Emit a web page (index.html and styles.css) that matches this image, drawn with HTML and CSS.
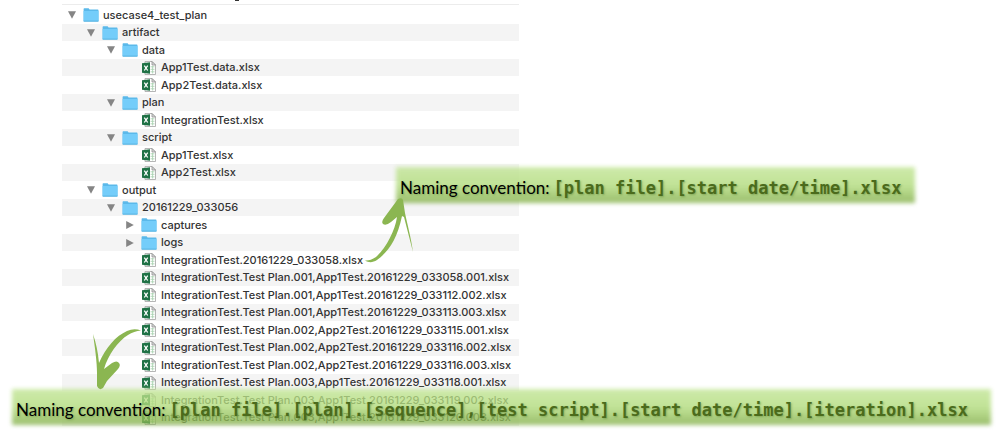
FILE: index.html
```html
<!DOCTYPE html>
<html lang="en">
<head>
<meta charset="utf-8">
<title>Test plan files</title>
<link rel="stylesheet" href="styles.css">
<script src="tree.js" defer></script>
</head>
<body>
<svg class="sprite" aria-hidden="true">
  <symbol id="folder" viewBox="0 0 16 14">
    <path d="M.6 1Q.6.3 1.3.3H5.6L6.6 1.6H14.8Q15.5 1.6 15.5 2.3V12.7Q15.5 13.5 14.8 13.5H1.3Q.6 13.5.6 12.7Z" fill="#5bb9ea"/>
    <path d="M.6 2.9H15.5V12.7Q15.5 13.2 14.8 13.2H1.3Q.6 13.2.6 12.7Z" fill="#74cdfa"/>
    <path d="M.6 13.1H15.5" stroke="#56aedd" stroke-width=".8"/>
  </symbol>
  <symbol id="excel" viewBox="0 0 16 14">
    <path d="M4 .5H11L14.5 4V13.5H4Z" fill="#fff" stroke="#a3a3a3" stroke-width=".8"/>
    <path d="M11 .5V4H14.5Z" fill="#ddd" stroke="#8f8f8f" stroke-width=".8"/>
    <path d="M9.5 5.8H13.5M9.5 8.3H13.5M9.5 10.8H13.5M11.6 5V12.5" stroke="#a5cfac" stroke-width=".8"/>
    <path d="M1 2.3L9 1.2V12.8L1 11.7Z" fill="#1e7145"/>
    <path d="M3.3 4.6L6.7 9.5M6.7 4.6L3.3 9.5" stroke="#fff" stroke-width="1.3"/>
  </symbol>
  <symbol id="arrow" viewBox="0 0 10 10"><path d="M1 1.2H9L5 8.8Z" fill="#858585"/></symbol>
</svg>
<main class="page">
  <div class="clip-row"><span class="clip-mark"></span></div>
  <ul class="tree" id="tree"></ul>

  <svg class="pointer pointer-up" viewBox="0 0 52 68" aria-hidden="true">
    <path d="M1 63.500C5 66 9 65.500 13 63C24 55 33 43 38 19L40 20L49 55C47 40 43 26 41 16L39 3Q38 0 34 2L20 21Q17 25 19 27Q22 29 27 25L33 20C31 34 22 51 12 60Q6 64 1 63.500Z"/>
  </svg>
  <svg class="pointer pointer-down" viewBox="0 0 52 64" aria-hidden="true">
    <path d="M51 2.500Q44 0 37 3C26 8 16 19 9 35C8 24 6 15 3 6C5 20 7 34 7 45L7 58Q9 63 13 60L17 53L28 41Q31 37 29 35Q27 32 22 35L14 41C18 27 28 13 38 7Q44 3 51 2.500Z"/>
  </svg>

  <p class="callout callout-run"><span>Naming convention:</span> <code>[plan file].[start date/time].xlsx</code></p>
  <p class="callout callout-step"><span>Naming convention:</span> <code>[plan file].[plan].[sequence],[test script].[start date/time].[iteration].xlsx</code></p>
</main>
</body>
</html>
```
FILE: styles.css
```css
body {
  margin: 0;
  background: #fff;
  color: #333;
  font: 500 11px/17px Inter, "Liberation Sans", sans-serif;
}
.sprite { display: none; }
.page {
  position: relative;
  min-height: 438px;
  overflow: hidden;
}
.clip-row {
  height: 5px;
  margin-left: 62px;
  width: 457px;
  padding-left: 173px;
  box-sizing: border-box;
  border-bottom: 1px solid #ececec;
}
.clip-mark {
  display: block;
  width: 4px;
  height: 1px;
  background: #333;
}
.tree {
  display: grid;
  grid-auto-rows: 18px 17px;
  width: 457px;
  margin: 1px 0 0 62px;
  padding: 0;
  list-style: none;
}
.row {
  display: flex;
  align-items: center;
  white-space: nowrap;
}
.row:nth-child(even) { background: #f4f4f4; }
.level-1 { padding-left: 19px; }
.level-2 { padding-left: 39px; }
.level-3 { padding-left: 58px; }
.toggle {
  width: 21px;
  height: 16px;
  padding: 0 0 0 5px;
  border: 0;
  background: none;
  display: flex;
  align-items: center;
}
.toggle svg { width: 10px; height: 10px; }
.toggle[aria-expanded="false"] svg { transform: rotate(-90deg); }
.spacer { width: 21px; }
.icon {
  width: 16px;
  height: 14px;
  margin-right: 4px;
}
.pointer {
  position: absolute;
  z-index: 2;
  fill: #8bb651;
}
.pointer-up {
  left: 364px;
  top: 197px;
  width: 52px;
  height: 68px;
}
.pointer-down {
  left: 90px;
  top: 328px;
  width: 52px;
  height: 64px;
}
.callout {
  position: absolute;
  z-index: 1;
  box-sizing: border-box;
  display: flex;
  align-items: center;
  gap: 4px;
  height: 38px;
  margin: 0;
  padding: 6px 5px 0;
  white-space: nowrap;
  color: #000;
  font: 17px/24px Lato, sans-serif;
  text-shadow: 1px 1px 2px #5a802f80;
}
.callout::before {
  content: "";
  position: absolute;
  inset: 1px;
  z-index: -1;
  background: linear-gradient(#c0e492c8, #b0db7ac8 50%, #84b04bd0);
  filter: blur(2px);
}
.callout code {
  color: #4b6b1c;
  font: bold 17px/24px "DejaVu Sans Mono", monospace;
}
.callout-run {
  left: 395px;
  top: 166px;
  width: 521px;
}
.callout-step {
  left: 11px;
  top: 388px;
  width: 981px;
}
```
FILE: tree.js
```js
const entries = [
  [0, "open", "usecase4_test_plan"],
  [1, "open", "artifact"],
  [2, "open", "data"],
  [3, "file", "App1Test.data.xlsx"],
  [3, "file", "App2Test.data.xlsx"],
  [2, "open", "plan"],
  [3, "file", "IntegrationTest.xlsx"],
  [2, "open", "script"],
  [3, "file", "App1Test.xlsx"],
  [3, "file", "App2Test.xlsx"],
  [1, "open", "output"],
  [2, "open", "20161229_033056"],
  [3, "closed", "captures"],
  [3, "closed", "logs"],
  [3, "file", "IntegrationTest.20161229_033058.xlsx"],
  [3, "file", "IntegrationTest.Test Plan.001,App1Test.20161229_033058.001.xlsx"],
  [3, "file", "IntegrationTest.Test Plan.001,App1Test.20161229_033112.002.xlsx"],
  [3, "file", "IntegrationTest.Test Plan.001,App1Test.20161229_033113.003.xlsx"],
  [3, "file", "IntegrationTest.Test Plan.002,App2Test.20161229_033115.001.xlsx"],
  [3, "file", "IntegrationTest.Test Plan.002,App2Test.20161229_033116.002.xlsx"],
  [3, "file", "IntegrationTest.Test Plan.002,App2Test.20161229_033116.003.xlsx"],
  [3, "file", "IntegrationTest.Test Plan.003,App1Test.20161229_033118.001.xlsx"],
  [3, "file", "IntegrationTest.Test Plan.003,App1Test.20161229_033119.002.xlsx"],
  [3, "file", "IntegrationTest.Test Plan.003,App1Test.20161229_033120.003.xlsx"]
];

document.getElementById("tree").innerHTML = entries.map(([level, kind, name]) => {
  const lead = kind === "file"
    ? '<span class="spacer"></span>'
    : `<button class="toggle" type="button" aria-label="${name}" aria-expanded="${kind === "open"}"><svg><use href="#arrow"/></svg></button>`;
  const icon = kind === "file" ? "excel" : "folder";
  return `<li class="row level-${level}">${lead}<svg class="icon"><use href="#${icon}"/></svg><span>${name}</span></li>`;
}).join("");
```
